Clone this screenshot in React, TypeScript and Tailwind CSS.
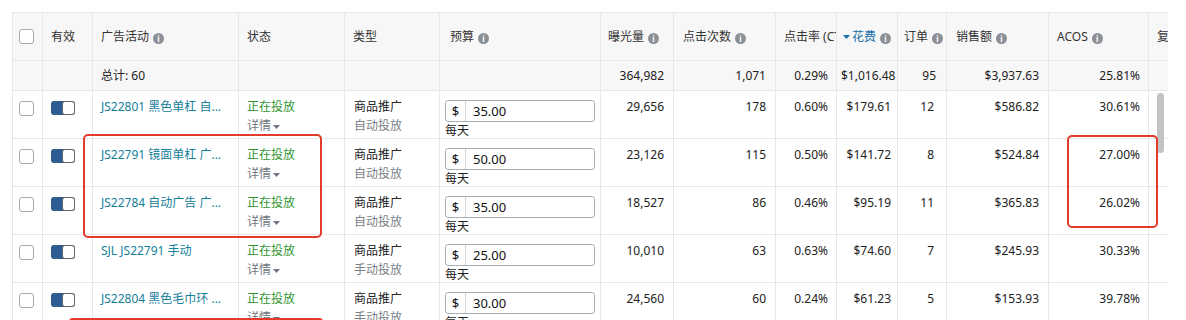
import React from 'react';

interface Row {
  name: string;
  target: string;
  budget: string;
  imp: string;
  clicks: string;
  ctr: string;
  spend: string;
  orders: string;
  sales: string;
  acos: string;
}

const ROWS: Row[] = [
  { name: 'JS22801 黑色单杠 自...', target: '自动投放', budget: '35.00', imp: '29,656', clicks: '178', ctr: '0.60%', spend: '$179.61', orders: '12', sales: '$586.82', acos: '30.61%' },
  { name: 'JS22791 镜面单杠 广...', target: '自动投放', budget: '50.00', imp: '23,126', clicks: '115', ctr: '0.50%', spend: '$141.72', orders: '8', sales: '$524.84', acos: '27.00%' },
  { name: 'JS22784 自动广告 广...', target: '自动投放', budget: '35.00', imp: '18,527', clicks: '86', ctr: '0.46%', spend: '$95.19', orders: '11', sales: '$365.83', acos: '26.02%' },
  { name: 'SJL JS22791 手动', target: '手动投放', budget: '25.00', imp: '10,010', clicks: '63', ctr: '0.63%', spend: '$74.60', orders: '7', sales: '$245.93', acos: '30.33%' },
  { name: 'JS22804 黑色毛巾环 ...', target: '手动投放', budget: '30.00', imp: '24,560', clicks: '60', ctr: '0.24%', spend: '$61.23', orders: '5', sales: '$153.93', acos: '39.78%' },
];

const COLS = [30, 50, 146, 106, 95, 161, 73, 102, 61, 61, 49, 102, 100, 60];

function Info() {
  return (
    <span className="ml-[4px] inline-flex h-[11px] w-[11px] items-center justify-center rounded-full bg-[#8b9096] align-[-1px] text-[8px] font-bold leading-none text-white">
      i
    </span>
  );
}

function Checkbox() {
  return <div className="h-[15px] w-[15px] rounded-[3px] border border-[#a9a9a9] bg-white" />;
}

function Toggle() {
  return (
    <div className="flex h-[14px] w-[24px] justify-end rounded-[3px] bg-[#2d5b92]">
      <div className="h-[14px] w-[13px] rounded-[3px] border border-[#5f6670] bg-white" />
    </div>
  );
}

function Caret({ color }: { color: string }) {
  return (
    <svg width="7" height="4" viewBox="0 0 7 4" className="ml-[2px] inline-block align-middle">
      <path d="M0 0h7L3.5 4z" fill={color} />
    </svg>
  );
}

const th = 'h-[48px] border border-[#e7e7e7] bg-[#f7f7f7] px-2 py-0 text-left align-middle font-normal whitespace-nowrap overflow-hidden';
const tt = 'h-[30px] border border-[#e7e7e7] bg-[#f7f7f7] px-2 py-0 align-middle whitespace-nowrap overflow-hidden';
const td = 'h-[48px] border border-[#e7e7e7] bg-white px-2 pt-[6px] pb-0 align-top leading-[19px] whitespace-nowrap overflow-hidden';

export default function App() {
  return (
    <div
      className="relative h-[320px] w-[1186px] overflow-hidden bg-white text-[12px] text-[#222]"
      style={{ fontFamily: '"Noto Sans", "Noto Sans CJK SC", sans-serif' }}
    >
      <div className="pl-[12px] pt-[12px]">
        <div className="w-[1156px] overflow-hidden">
          <table className="table-fixed border-collapse" style={{ width: COLS.reduce((a, b) => a + b, 0) }}>
            <colgroup>
              {COLS.map((w, i) => (
                <col key={i} style={{ width: w }} />
              ))}
            </colgroup>
            <thead>
              <tr className="text-[#333]">
                <th className={`${th} pl-[6px]`}><Checkbox /></th>
                <th className={th}>有效</th>
                <th className={th}>广告活动<Info /></th>
                <th className={th}>状态</th>
                <th className={th}>类型</th>
                <th className={`${th} pl-[10px]`}>预算<Info /></th>
                <th className={`${th} pl-[7px]`}>曝光量<Info /></th>
                <th className={`${th} pl-[9px]`}>点击次数<Info /></th>
                <th className={`${th} pl-[8px] pr-0`}>点击率 (CTR)</th>
                <th className={`${th} pl-[6px] text-[#1b6fa8]`}>
                  <svg width="7" height="4" viewBox="0 0 7 4" className="mr-[2px] inline-block align-middle">
                    <path d="M0 0h7L3.5 4z" fill="#1b6fa8" />
                  </svg>
                  花费<Info />
                </th>
                <th className={`${th} pl-[6px]`}>订单<Info /></th>
                <th className={`${th} pl-[9px]`}>销售额<Info /></th>
                <th className={th}>ACOS<Info /></th>
                <th className={th}>复制</th>
              </tr>
            </thead>
            <tbody>
              <tr>
                <td className={tt} />
                <td className={tt} />
                <td className={`${tt} text-[#222]`}>总计: 60</td>
                <td className={tt} />
                <td className={tt} />
                <td className={tt} />
                <td className={`${tt} pr-[9px] text-right`}>364,982</td>
                <td className={`${tt} pr-[9px] text-right`}>1,071</td>
                <td className={`${tt} pr-[8px] text-right`}>0.29%</td>
                <td className={`${tt} pl-[4px] pr-0 text-left`}>$1,016.48</td>
                <td className={`${tt} pr-[10px] text-right`}>95</td>
                <td className={`${tt} pr-[9px] text-right`}>$3,937.63</td>
                <td className={`${tt} pr-[8px] text-right`}>25.81%</td>
                <td className={tt} />
              </tr>
              {ROWS.map((r) => (
                <tr key={r.name}>
                  <td className={`${td} pl-[6px] pt-[10px]`}><Checkbox /></td>
                  <td className={`${td} pt-[10px]`}><Toggle /></td>
                  <td className={`${td} text-[#15809a]`}>{r.name}</td>
                  <td className={td}>
                    <div className="text-[#2f962f]">正在投放</div>
                    <div className="text-[#6f7780]">详情<Caret color="#6f7780" /></div>
                  </td>
                  <td className={`${td} pl-[9px]`}>
                    <div className="text-[#222]">商品推广</div>
                    <div className="text-[#7a8088]">{r.target}</div>
                  </td>
                  <td className={`${td} pl-[5px] pt-[9px] leading-none`}>
                    <div className="flex h-[22px] w-[150px] items-center rounded-[3px] border border-[#a9acb0] bg-white text-[13px] text-[#111]">
                      <span className="flex h-full w-[20px] items-center justify-center border-r border-[#d5d8db]">$</span>
                      <span className="pl-[7px]">{r.budget}</span>
                    </div>
                    <div className="mt-[2px] text-[12px] leading-[14px] text-[#222]">每天</div>
                  </td>
                  <td className={`${td} pr-[9px] text-right`}>{r.imp}</td>
                  <td className={`${td} pr-[9px] text-right`}>{r.clicks}</td>
                  <td className={`${td} pr-[8px] text-right`}>{r.ctr}</td>
                  <td className={`${td} pr-[6px] text-right`}>{r.spend}</td>
                  <td className={`${td} pr-[12px] text-right`}>{r.orders}</td>
                  <td className={`${td} pr-[9px] text-right`}>{r.sales}</td>
                  <td className={`${td} pr-[8px] text-right`}>{r.acos}</td>
                  <td className={td} />
                </tr>
              ))}
            </tbody>
          </table>
        </div>
      </div>

      {/* scrollbar thumb */}
      <div className="absolute left-[1157px] top-[93px] h-[60px] w-[7px] rounded-full bg-[#c3c3c3]" />

      {/* red highlight boxes */}
      <div className="absolute left-[83px] top-[134px] h-[104px] w-[239px] rounded-[5px] border-2 border-[#e23b2e]" />
      <div className="absolute left-[1067px] top-[135px] h-[93px] w-[91px] rounded-[5px] border-2 border-[#e23b2e]" />
      <div className="absolute left-[68px] top-[318px] h-[60px] w-[256px] rounded-[5px] border-2 border-[#e23b2e]" />
    </div>
  );
}
